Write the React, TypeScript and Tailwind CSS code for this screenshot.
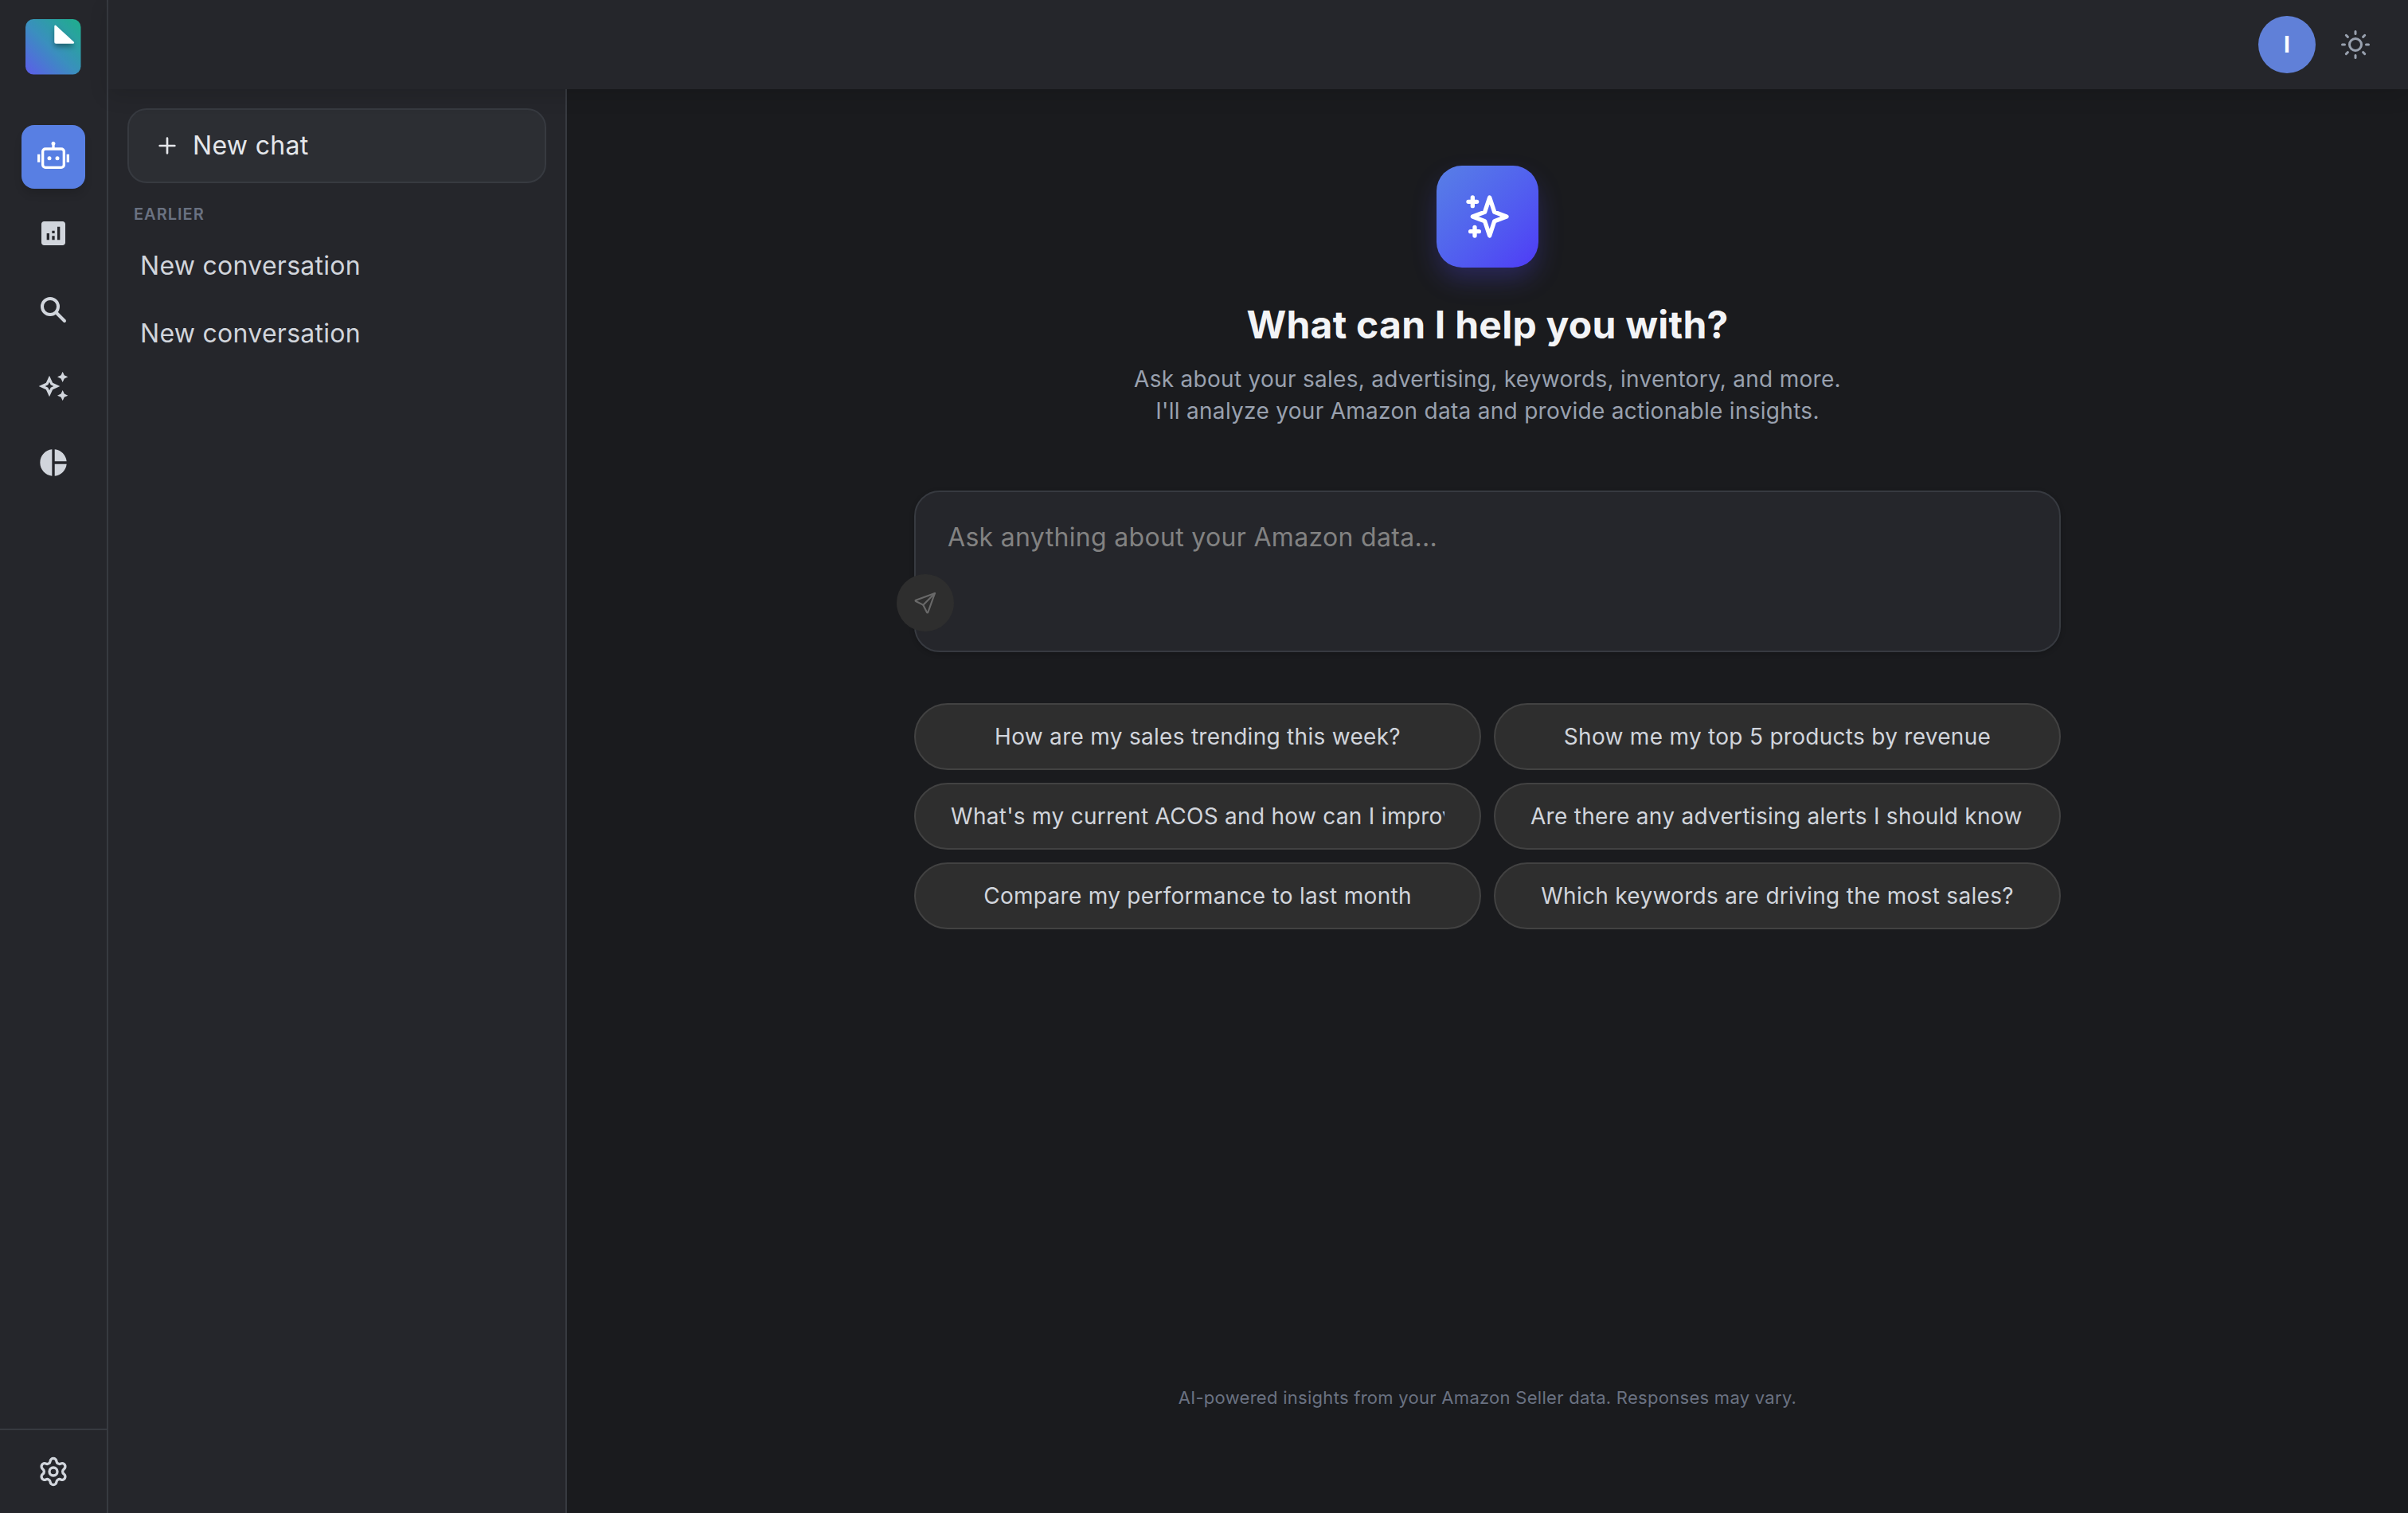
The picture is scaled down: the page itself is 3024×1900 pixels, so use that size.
import { Settings } from 'lucide-react';
import { HiOutlineSparkles } from 'react-icons/hi';
import { MdAnalytics, MdOutlineAutoAwesome, MdPieChart } from 'react-icons/md';

const conversations = ['New conversation', 'New conversation'];

const suggestions = [
  'How are my sales trending this week?',
  'Show me my top 5 products by revenue',
  "What's my current ACOS and how can I improve it?",
  'Are there any advertising alerts I should know about?',
  'Compare my performance to last month',
  'Which keywords are driving the most sales?',
];

function Logo() {
  return (
    <svg width="70" height="70" viewBox="0 0 70 70" fill="none">
      <defs>
        <linearGradient id="logo-bg" x1="2" y1="68" x2="64" y2="6" gradientUnits="userSpaceOnUse">
          <stop stopColor="#5b5fe8" />
          <stop offset="0.5" stopColor="#3a8fbe" />
          <stop offset="1" stopColor="#22aa92" />
        </linearGradient>
        <filter id="logo-shadow" x="20" y="0" width="50" height="50" filterUnits="userSpaceOnUse">
          <feDropShadow dx="0" dy="4" stdDeviation="3" floodColor="#000" floodOpacity="0.35" />
        </filter>
      </defs>
      <rect width="69.5" height="69.5" rx="10" fill="url(#logo-bg)" />
      <path
        d="M36.3 9.2c0-1.3 1.3-1.8 2.2-1L60.6 28.4c1 .9.5 2.3-.8 2.3H38.6c-1.3 0-2.3-1-2.3-2.3z"
        fill="#fff"
        filter="url(#logo-shadow)"
      />
    </svg>
  );
}

function RobotIcon() {
  return (
    <svg width="40" height="40" viewBox="0 0 24 24" fill="currentColor">
      <path d="M13.5 2c0 .444-.193.843-.5 1.118V5h5a3 3 0 0 1 3 3v10a3 3 0 0 1-3 3H6a3 3 0 0 1-3-3V8a3 3 0 0 1 3-3h5V3.118A1.5 1.5 0 1 1 13.5 2ZM6 7a1 1 0 0 0-1 1v10a1 1 0 0 0 1 1h12a1 1 0 0 0 1-1V8a1 1 0 0 0-1-1H6ZM2 10H0v6h2v-6Zm20 0h2v6h-2v-6ZM9 14.5a1.5 1.5 0 1 0 0-3 1.5 1.5 0 0 0 0 3Zm6 0a1.5 1.5 0 1 0 0-3 1.5 1.5 0 0 0 0 3Z" />
    </svg>
  );
}

function SearchIcon() {
  return (
    <svg width="40" height="40" viewBox="0 0 40 40" fill="none" stroke="currentColor" strokeWidth="4" strokeLinecap="round">
      <circle cx="16" cy="16" r="10" />
      <path d="M23.5 23.5L34 34" />
    </svg>
  );
}

function SunIcon() {
  return (
    <svg width="40" height="40" viewBox="0 0 40 40" fill="none" stroke="currentColor" strokeWidth="3" strokeLinecap="round">
      <circle cx="20" cy="20" r="7.5" />
      <path d="M20 3.5v3M20 33.5v3M3.5 20h3M33.5 20h3M8.3 8.3l2.1 2.1M29.6 29.6l2.1 2.1M31.7 8.3l-2.1 2.1M10.4 29.6l-2.1 2.1" />
    </svg>
  );
}

function PlusIcon() {
  return (
    <svg width="32" height="32" viewBox="0 0 24 24" fill="none" stroke="currentColor" strokeWidth="2" strokeLinecap="round">
      <path d="M12 5v14M5 12h14" />
    </svg>
  );
}

function SendIcon() {
  return (
    <svg
      width="32"
      height="32"
      viewBox="0 0 24 24"
      fill="none"
      stroke="currentColor"
      strokeWidth="1.6"
      strokeLinecap="round"
      strokeLinejoin="round"
    >
      <path d="M10 14L21 3" />
      <path d="M21 3l-6.5 18a.55.55 0 0 1-1 0L10 14l-7-3.5a.55.55 0 0 1 0-1L21 3" />
    </svg>
  );
}

function Sidebar() {
  const item = 'flex size-20 items-center justify-center rounded-2xl text-gray-300';

  return (
    <aside className="flex w-[136px] shrink-0 flex-col border-r-2 border-[#373a40] bg-[#25262b]">
      <div className="flex h-[117px] justify-center pt-6">
        <Logo />
      </div>
      <nav className="flex flex-1 flex-col items-center gap-4 pt-10">
        <button className="flex size-20 items-center justify-center rounded-2xl bg-[#587fe3] text-white shadow-[0_8px_12px_-2px_rgba(0,0,0,0.14)]">
          <RobotIcon />
        </button>
        <button className={item}>
          <MdAnalytics size={40} />
        </button>
        <button className={item}>
          <SearchIcon />
        </button>
        <button className={item}>
          <MdOutlineAutoAwesome size={40} />
        </button>
        <button className={item}>
          <MdPieChart size={40} />
        </button>
      </nav>
      <div className="flex h-[106px] items-center justify-center border-t-2 border-[#373a40] text-gray-300">
        <Settings size={40} strokeWidth={2} />
      </div>
    </aside>
  );
}

function ChatList() {
  return (
    <section className="flex w-[576px] shrink-0 flex-col border-r-2 border-[#373a40] bg-[#25262b] p-6">
      <button className="flex h-[94px] items-center gap-4 rounded-3xl border-2 border-[#373a40] bg-[#2c2e33] px-8 text-[32px] tracking-[0.32px] text-gray-200">
        <PlusIcon />
        New chat
      </button>
      <h2 className="mt-6 px-2 text-[20px] leading-[30px] font-semibold tracking-[1px] text-gray-500">EARLIER</h2>
      <ul className="mt-[7px]">
        {conversations.map((name, i) => (
          <li key={i} className="flex h-[85px] items-center px-4 text-[32px] tracking-[0.28px] text-gray-300">
            {name}
          </li>
        ))}
      </ul>
    </section>
  );
}

export default function App() {
  return (
    <div className="flex h-screen overflow-hidden bg-[#1a1b1e] font-['Inter',sans-serif]">
      <Sidebar />
      <div className="flex min-w-0 flex-1 flex-col">
        <header className="relative z-10 flex h-28 shrink-0 items-center justify-end gap-[30px] bg-[#25262b] pr-[46px] shadow-[0_8px_24px_rgba(0,0,0,0.12)]">
          <div className="flex size-[72px] items-center justify-center rounded-full bg-[#6080d8] text-[28px] font-bold text-white">
            I
          </div>
          <button className="text-gray-400">
            <SunIcon />
          </button>
        </header>
        <div className="flex min-h-0 flex-1">
          <ChatList />
          <main className="flex flex-1 flex-col items-center pt-24">
            <div className="flex size-32 items-center justify-center rounded-[32px] bg-linear-135 from-[#587fe6] to-[#4f39f6] text-white shadow-[0_16px_32px_-2px_rgba(79,70,229,0.3)]">
              <HiOutlineSparkles size={64} />
            </div>
            <h1 className="mt-10 text-[48px] leading-[64px] font-bold tracking-[0.24px] text-gray-100">
              What can I help you with?
            </h1>
            <p className="mt-4 text-center text-[28px] leading-10 tracking-[0.29px] text-gray-400">
              Ask about your sales, advertising, keywords, inventory, and more.
              <br />
              I'll analyze your Amazon data and provide actionable insights.
            </p>
            <div className="relative mt-20 h-[203px] w-[1440px] rounded-[32px] border-2 border-[#373a40] bg-[#25262b] px-10 pt-[35px] text-[32px] leading-[44px] tracking-[0.32px] text-[#828282] shadow-[0_2px_6px_rgba(0,0,0,0.2)]">
              Ask anything about your Amazon data...
              <button className="absolute top-[103px] -left-6 flex size-[72px] items-center justify-center rounded-full bg-[#2e2e2e] text-[#696969]">
                <SendIcon />
              </button>
            </div>
            <div className="mt-16 grid w-[1440px] grid-cols-2 gap-4">
              {suggestions.map((text) => (
                <button
                  key={text}
                  className="flex h-[84px] min-w-0 items-center justify-center rounded-full border-2 border-[#424242] bg-[#2e2e2e] px-11 text-[28px] tracking-[0.29px] text-gray-300"
                >
                  <span className="overflow-hidden whitespace-nowrap">{text}</span>
                </button>
              ))}
            </div>
            <p className="mt-auto mb-[129px] text-[22px] leading-8 tracking-[0.28px] text-gray-500">
              AI-powered insights from your Amazon Seller data. Responses may vary.
            </p>
          </main>
        </div>
      </div>
    </div>
  );
}
